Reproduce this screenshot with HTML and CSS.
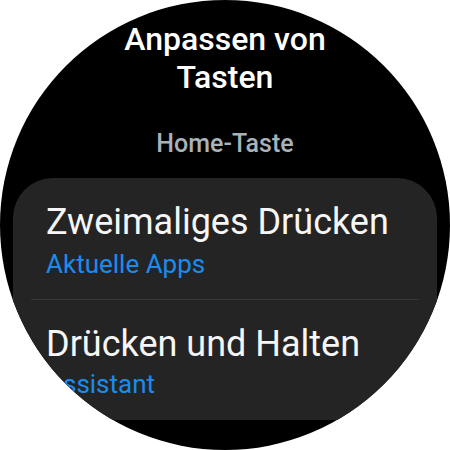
FILE: index.html
```html
<!DOCTYPE html>
<html lang="de">
<head>
<meta charset="utf-8">
<link rel="stylesheet" href="styles.css">
</head>
<body>
<div class="watch">
  <h1 class="title">Anpassen von<br>Tasten</h1>
  <div class="section">Home-Taste</div>
  <div class="card">
    <div class="item">
      <div class="item-title">Zweimaliges Drücken</div>
      <div class="item-sub">Aktuelle Apps</div>
    </div>
    <div class="divider"></div>
    <div class="item">
      <div class="item-title">Drücken und Halten</div>
      <div class="item-sub">Assistant</div>
    </div>
  </div>
</div>
</body>
</html>
```
FILE: styles.css
```css
html, body {
  margin: 0;
  padding: 0;
  background: #ffffff;
}
.watch {
  width: 450px;
  height: 450px;
  border-radius: 50%;
  overflow: hidden;
  background: #000000;
  font-family: Roboto, "Noto Sans", sans-serif;
  display: flex;
  flex-direction: column;
  align-items: center;
}
.title {
  margin: 20px 0 0 0;
  font-size: 32px;
  line-height: 38px;
  font-weight: 500;
  color: #ffffff;
  text-align: center;
}
.section {
  margin-top: 33px;
  font-size: 25px;
  line-height: 30px;
  font-weight: 500;
  color: #a9b1b9;
}
.card {
  margin-top: 19px;
  width: 424px;
  height: 242px;
  box-sizing: border-box;
  background: #242424;
  border-radius: 40px 40px 0 0;
  flex-shrink: 0;
}
.item {
  padding: 24px 0 12px 33px;
}
.item-title {
  font-size: 36px;
  line-height: 40px;
  color: #f6f6f6;
  white-space: nowrap;
}
.item-sub {
  font-size: 26px;
  line-height: 45px;
  color: #1a8cf0;
}
.item + .divider + .item .item-sub {
  margin-top: -2px;
}
.divider {
  height: 1px;
  margin: 0 18px;
  background: #363636;
}
```
